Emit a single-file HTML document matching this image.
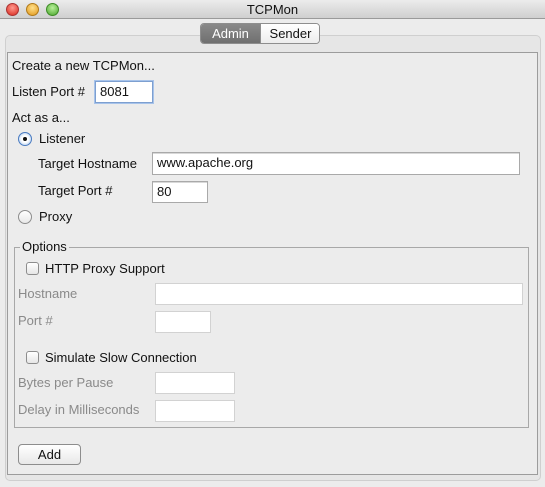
<!DOCTYPE html>
<html><head><style>
*{margin:0;padding:0;box-sizing:border-box}
body{width:545px;height:487px;background:#ececec;font-family:"Liberation Sans",sans-serif;font-size:13px;color:#111;position:relative;overflow:hidden}
.a{position:absolute;white-space:nowrap;line-height:16px}
.in{position:absolute;background:#fff;border:1px solid #a9a9a9;box-shadow:inset 0 1px 0 #d8d8d8;padding-left:4px;line-height:19px;font-size:13px}
.in.d{border-color:#d2d2d2;box-shadow:none}
.g{color:#8a8a8a}
.rb{position:absolute;width:14px;height:14px;border-radius:50%;border:1px solid #8d8d8d;background:linear-gradient(#fff,#e8e8e8)}
.cb{position:absolute;width:13px;height:13px;border-radius:3px;border:1px solid #8d8d8d;background:linear-gradient(#fff,#e6e6e6)}
</style></head><body>
<div style="position:absolute;left:0;top:0;width:545px;height:19px;background:linear-gradient(#ececec,#cfcfcf);border-bottom:1px solid #9a9a9a"></div>
<div class="a" style="left:0;width:545px;text-align:center;top:2px">TCPMon</div>
<div style="position:absolute;left:6px;top:3px;width:13px;height:13px;border-radius:50%;background:radial-gradient(circle at 50% 35%,#ff9a8f,#d8261b);border:1px solid #a33"></div>
<div style="position:absolute;left:26px;top:3px;width:13px;height:13px;border-radius:50%;background:radial-gradient(circle at 50% 35%,#ffe08a,#e0961a);border:1px solid #b07a1a"></div>
<div style="position:absolute;left:46px;top:3px;width:13px;height:13px;border-radius:50%;background:radial-gradient(circle at 50% 35%,#b8f09a,#4aa52c);border:1px solid #3d8a26"></div>
<div style="position:absolute;left:5px;top:35px;width:536px;height:446px;border:1px solid #cfcfcf;border-radius:5px;background:#e6e6e6"></div>
<div style="position:absolute;left:7px;top:52px;width:531px;height:423px;border:1px solid #9c9c9c;background:#ececec"></div>
<div style="position:absolute;left:200px;top:23px;width:120px;height:21px;border:1px solid #8e8e8e;border-radius:4px;background:#fff;overflow:hidden">
<div style="position:absolute;left:0;top:0;width:59px;height:20px;background:linear-gradient(#8a8a8a,#6e6e6e);color:#fff;text-align:center;line-height:19px">Admin</div>
<div style="position:absolute;left:59px;top:0;width:60px;height:20px;background:linear-gradient(#fff,#ececec);text-align:center;line-height:19px;border-left:1px solid #8e8e8e">Sender</div></div>
<div class="a" style="left:12px;top:58px">Create a new TCPMon...</div>
<div class="a" style="left:12px;top:84px">Listen Port #</div>
<div class="in" style="left:95px;top:81px;width:58px;height:22px;border-color:#7d9fd0;box-shadow:0 0 0 1px #a7c3ea">8081</div>
<div class="a" style="left:12px;top:110px">Act as a...</div>
<div class="rb" style="left:18px;top:132px;border-color:#4a7bc0;background:radial-gradient(circle,#fff 40%,#9cc0ec)"><div style="position:absolute;left:4px;top:4px;width:4px;height:4px;border-radius:50%;background:#111"></div></div>
<div class="a" style="left:39px;top:131px">Listener</div>
<div class="a" style="left:38px;top:156px">Target Hostname</div>
<div class="in" style="left:152px;top:152px;width:368px;height:23px">www.apache.org</div>
<div class="a" style="left:38px;top:183px">Target Port #</div>
<div class="in" style="left:152px;top:181px;width:56px;height:22px">80</div>
<div class="rb" style="left:18px;top:210px"></div>
<div class="a" style="left:39px;top:209px">Proxy</div>
<div style="position:absolute;left:14px;top:247px;width:515px;height:181px;border:1px solid #a8a8a8"></div>
<div class="a" style="left:20px;top:239px;background:#ececec;padding:0 2px">Options</div>
<div class="cb" style="left:26px;top:262px"></div>
<div class="a" style="left:45px;top:261px">HTTP Proxy Support</div>
<div class="a g" style="left:18px;top:286px">Hostname</div>
<div class="in d" style="left:155px;top:283px;width:368px;height:22px"></div>
<div class="a g" style="left:18px;top:313px">Port #</div>
<div class="in d" style="left:155px;top:311px;width:56px;height:22px"></div>
<div class="cb" style="left:26px;top:351px"></div>
<div class="a" style="left:45px;top:350px">Simulate Slow Connection</div>
<div class="a g" style="left:18px;top:375px">Bytes per Pause</div>
<div class="in d" style="left:155px;top:372px;width:80px;height:22px"></div>
<div class="a g" style="left:18px;top:402px">Delay in Milliseconds</div>
<div class="in d" style="left:155px;top:400px;width:80px;height:22px"></div>
<div style="position:absolute;left:18px;top:444px;width:63px;height:21px;border:1px solid #8d8d8d;border-radius:4px;background:linear-gradient(#fff,#e8e8e8);text-align:center;line-height:19px">Add</div>
</body></html>
